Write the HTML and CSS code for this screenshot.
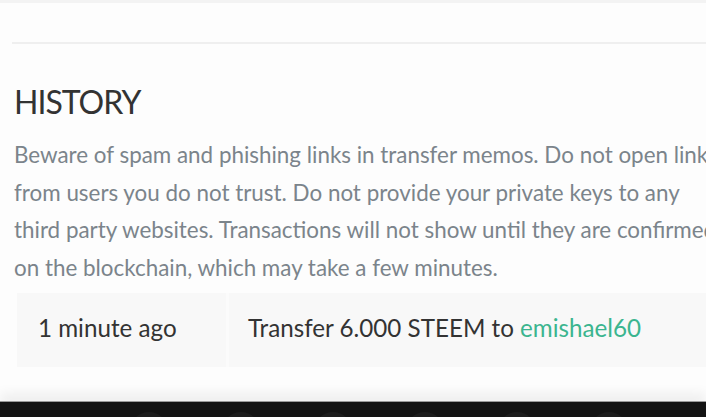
FILE: index.html
```html
<!DOCTYPE html>
<html lang="en">
<head>
<meta charset="utf-8">
<title>History</title>
<link rel="stylesheet" href="styles.css">
</head>
<body>
<div class="topstrip"></div>
<main class="page">
  <hr class="rule">
  <section class="history">
    <h2 class="title">HISTORY</h2>
    <p class="warning">Beware of spam and phishing links in transfer memos. Do not open links<br>from users you do not trust. Do not provide your private keys to any<br>third party websites. Transactions will not show until they are confirmed<br>on the blockchain, which may take a few minutes.</p>
    <div class="row">
      <div class="cell time">1 minute ago</div>
      <div class="cell desc">Transfer 6.000 STEEM to <a class="user" href="#">emishael60</a></div>
    </div>
  </section>
</main>
<footer class="navbar">
  <span class="dot"></span><span class="dot"></span><span class="dot"></span><span class="dot"></span><span class="dot"></span><span class="dot"></span>
</footer>
</body>
</html>
```
FILE: styles.css
```css
html, body {
  margin: 0;
  padding: 0;
  height: 417px;
  overflow: hidden;
  background: #fdfdfd;
}
body {
  font-family: Lato, "Noto Sans", sans-serif;
  display: flex;
  flex-direction: column;
}
.topstrip {
  height: 3px;
  background: #f3f3f3;
}
.page {
  flex: 1;
  padding: 0 0 0 12px;
  overflow: hidden;
}
.rule {
  margin: 39px 0 0 0;
  border: 0;
  border-top: 2px solid #efefef;
}
.history {
  padding-left: 2px;
}
.title {
  margin: 38px 0 0 0;
  font-size: 32px;
  font-weight: 400;
  line-height: 40px;
  color: #333;
  letter-spacing: -1px;
}
.warning {
  margin: 14px 0 0 0;
  font-size: 22.4px;
  line-height: 37.5px;
  color: #7b848b;
  white-space: nowrap;
}
.row {
  display: flex;
  margin: 7px 0 0 3px;
  height: 74px;
  background: #f8f8f8;
}
.cell {
  font-size: 24.2px;
  line-height: 70px;
  color: #333;
  white-space: nowrap;
}
.time {
  width: 188px;
  padding-left: 21px;
  border-right: 3px solid #fbfbfb;
}
.desc {
  padding-left: 19px;
}
.user {
  color: #3bb58f;
  text-decoration: none;
}
.navbar {
  height: 15px;
  background: #131313;
  border-top: 1px solid #9a9a9a;
  box-shadow: 0 -8px 12px rgba(0,0,0,0.06);
  display: flex;
  padding-left: 130px;
  gap: 54px;
  overflow: hidden;
}
.dot {
  width: 38px;
  height: 38px;
  margin-top: 10px;
  border-radius: 50%;
  background: #1c1c1c;
  flex: none;
}
```
